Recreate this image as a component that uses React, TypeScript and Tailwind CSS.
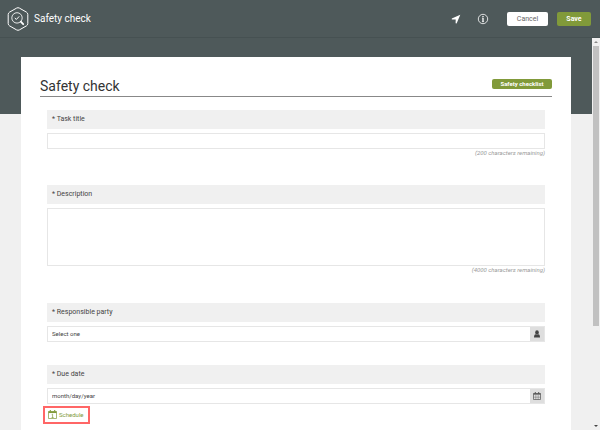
import type { ReactNode } from "react"

function LogoIcon() {
  return (
    <svg viewBox="0 0 22 24" className="h-6 w-[22px]" fill="none" stroke="#fff" aria-hidden="true">
      <path d="M9.6 1.1a2.8 2.8 0 0 1 2.8 0l7 4a2.8 2.8 0 0 1 1.4 2.4v9a2.8 2.8 0 0 1-1.4 2.4l-7 4a2.8 2.8 0 0 1-2.8 0l-7-4a2.8 2.8 0 0 1-1.4-2.4v-9a2.8 2.8 0 0 1 1.4-2.4z" strokeWidth="1" />
      <circle cx="10" cy="10.9" r="5.2" strokeWidth="1" opacity="0.85" />
      <path d="m7.8 11 1.6 1.4 2.8-3" strokeWidth="1" />
      <path d="m13.8 14.6 2.4 2.6" strokeWidth="1.8" strokeLinecap="round" />
    </svg>
  )
}

function SendIcon() {
  return (
    <svg viewBox="0 0 10 10" className="size-[10px]" fill="currentColor" aria-hidden="true">
      <path d="M9.3 0.7 5.6 9.5 4.6 9.2 4.7 5.6 0.8 5.4 0.8 4.5z" />
    </svg>
  )
}

function InfoIcon() {
  return (
    <svg viewBox="0 0 12 12" className="size-3" fill="none" stroke="currentColor" aria-hidden="true">
      <circle cx="6" cy="6" r="4.7" strokeWidth="0.8" />
      <path d="M6 2.9v1.3M6 4.9v4" strokeWidth="1.3" />
      <path d="M5 5.1h1M4.9 8.7h2.2" strokeWidth="0.5" />
    </svg>
  )
}

function PersonIcon() {
  return (
    <svg viewBox="0 0 8 8" className="size-2" fill="#444" aria-hidden="true">
      <ellipse cx="4" cy="2.5" rx="1.8" ry="2.2" />
      <path d="M1 7.5c0-2 .5-3 1.5-3.2.9.7 2.1.7 3 0C6.5 4.5 7 5.5 7 7.5z" />
    </svg>
  )
}

function CalendarIcon() {
  return (
    <svg viewBox="0 0 8 8" className="size-2" fill="none" stroke="#555" aria-hidden="true">
      <path d="M.5 1.5h7v6h-7z" strokeWidth="0.7" />
      <path d="M.5 2h7" strokeWidth="1.3" />
      <path d="M2.3 0v2M5.7 0v2" strokeWidth="1" />
      <path d="M2.8 3v4.5M5.2 3v4.5M.5 5.2h7" strokeWidth="0.4" />
    </svg>
  )
}

function ScheduleIcon() {
  return (
    <svg viewBox="0 0 9 9" className="size-[9px]" fill="none" stroke="#819a3a" aria-hidden="true">
      <path d="M.5 1.5h8v7h-8z" strokeWidth="0.7" />
      <path d="M.5 2.2h8" strokeWidth="1.7" />
      <path d="M2.3 0v1.5M6.7 0v1.5" strokeWidth="1.1" />
      <path d="M3.7 4.7 4.6 4.2V7.5M3.6 7.5h2" strokeWidth="0.7" />
    </svg>
  )
}

type FieldProps = {
  id: string
  label: string
  className?: string
  children: ReactNode
}

function Field({ id, label, className = "", children }: FieldProps) {
  return (
    <div className={className}>
      <label htmlFor={id} className="mb-1 block bg-[#f0f0f0] px-[5px] text-[7px] leading-[19px] text-[#444]">
        * {label}
      </label>
      {children}
    </div>
  )
}

function Remaining({ count }: { count: number }) {
  return (
    <p className="text-right text-[6px] leading-[7px] text-[#999] italic">({count} characters remaining)</p>
  )
}

type PickerProps = {
  id: string
  placeholder: string
  action: string
  icon: ReactNode
}

function Picker({ id, placeholder, action, icon }: PickerProps) {
  return (
    <div className="flex h-4 border border-[#e6e6e6]">
      <input
        id={id}
        type="text"
        placeholder={placeholder}
        className="min-w-0 flex-1 px-1 text-[6px] leading-[14px] outline-none placeholder:text-[#444]"
      />
      <button type="button" aria-label={action} className="flex w-[14px] items-center justify-center bg-[#dedede]">
        {icon}
      </button>
    </div>
  )
}

function Scrollbar() {
  return (
    <div className="flex w-2 flex-col items-center bg-[#f0f0f0]" aria-hidden="true">
      <svg viewBox="0 0 8 8" className="size-2" fill="#888">
        <path d="M4 3 6 5H2z" />
      </svg>
      <div className="h-[280px] w-[6px] bg-[#c1c1c1]" />
      <svg viewBox="0 0 8 8" className="mt-auto size-2" fill="#444">
        <path d="M2 3h4L4 5z" />
      </svg>
    </div>
  )
}

export default function App() {
  return (
    <div className="flex h-screen flex-col overflow-hidden bg-[#f0f0f0] font-['Roboto',sans-serif] text-[#333]">
      <header className="flex h-[38px] shrink-0 items-center border-b border-[#465152] bg-[#4e595a] pr-[9px] pl-[7px] text-white">
        <LogoIcon />
        <h1 className="ml-[5px] text-[10px] leading-3">Safety check</h1>
        <div className="ml-auto flex items-center">
          <button type="button" aria-label="Send">
            <SendIcon />
          </button>
          <button type="button" aria-label="Information" className="ml-4">
            <InfoIcon />
          </button>
          <button type="button" className="ml-[18px] w-[41px] rounded-xs bg-white pt-px text-[7px] leading-[13px] text-[#666]">
            Cancel
          </button>
          <button type="button" className="ml-[9px] w-[34px] rounded-xs bg-[#819a3a] pt-px text-[7px] leading-[13px] font-bold">
            Save
          </button>
        </div>
      </header>

      <div className="flex min-h-0 flex-1">
        <div className="min-w-0 flex-1 overflow-hidden bg-[linear-gradient(#4e595a_76px,#f0f0f0_76px)] px-[21px] pt-[19px]">
          <main className="min-h-full bg-white px-[19px] pt-5">
            <div className="flex items-start justify-between border-b border-[#888] pb-px">
              <h2 className="text-[14px] leading-[18px]">Safety check</h2>
              <span className="mt-[2px] w-[60px] rounded-xs bg-[#819a3a] text-center text-[6px] leading-[10px] font-bold text-white">
                Safety checklist
              </span>
            </div>

            <form className="px-[7px] pt-[13px]">
              <Field id="title" label="Task title" className="h-[75px]">
                <input id="title" type="text" className="block h-4 w-full border border-[#e6e6e6] px-1 text-[6px] outline-none" />
                <Remaining count={200} />
              </Field>
              <Field id="description" label="Description" className="h-[118px]">
                <textarea
                  id="description"
                  className="block h-[58px] w-full resize-none border border-[#e6e6e6] px-1 text-[6px] outline-none"
                />
                <Remaining count={4000} />
              </Field>
              <Field id="party" label="Responsible party" className="h-[62px]">
                <Picker id="party" placeholder="Select one" action="Choose person" icon={<PersonIcon />} />
              </Field>
              <Field id="due" label="Due date">
                <Picker id="due" placeholder="month/day/year" action="Open calendar" icon={<CalendarIcon />} />
              </Field>
              <button
                type="button"
                className="mt-[2px] -ml-1 flex h-[18px] w-[47px] items-center gap-[2px] border-2 border-[#f66] pb-[2px] pl-[3px] text-[6px] text-[#819a3a]"
              >
                <ScheduleIcon />
                Schedule
              </button>
            </form>
          </main>
        </div>
        <Scrollbar />
      </div>
    </div>
  )
}
